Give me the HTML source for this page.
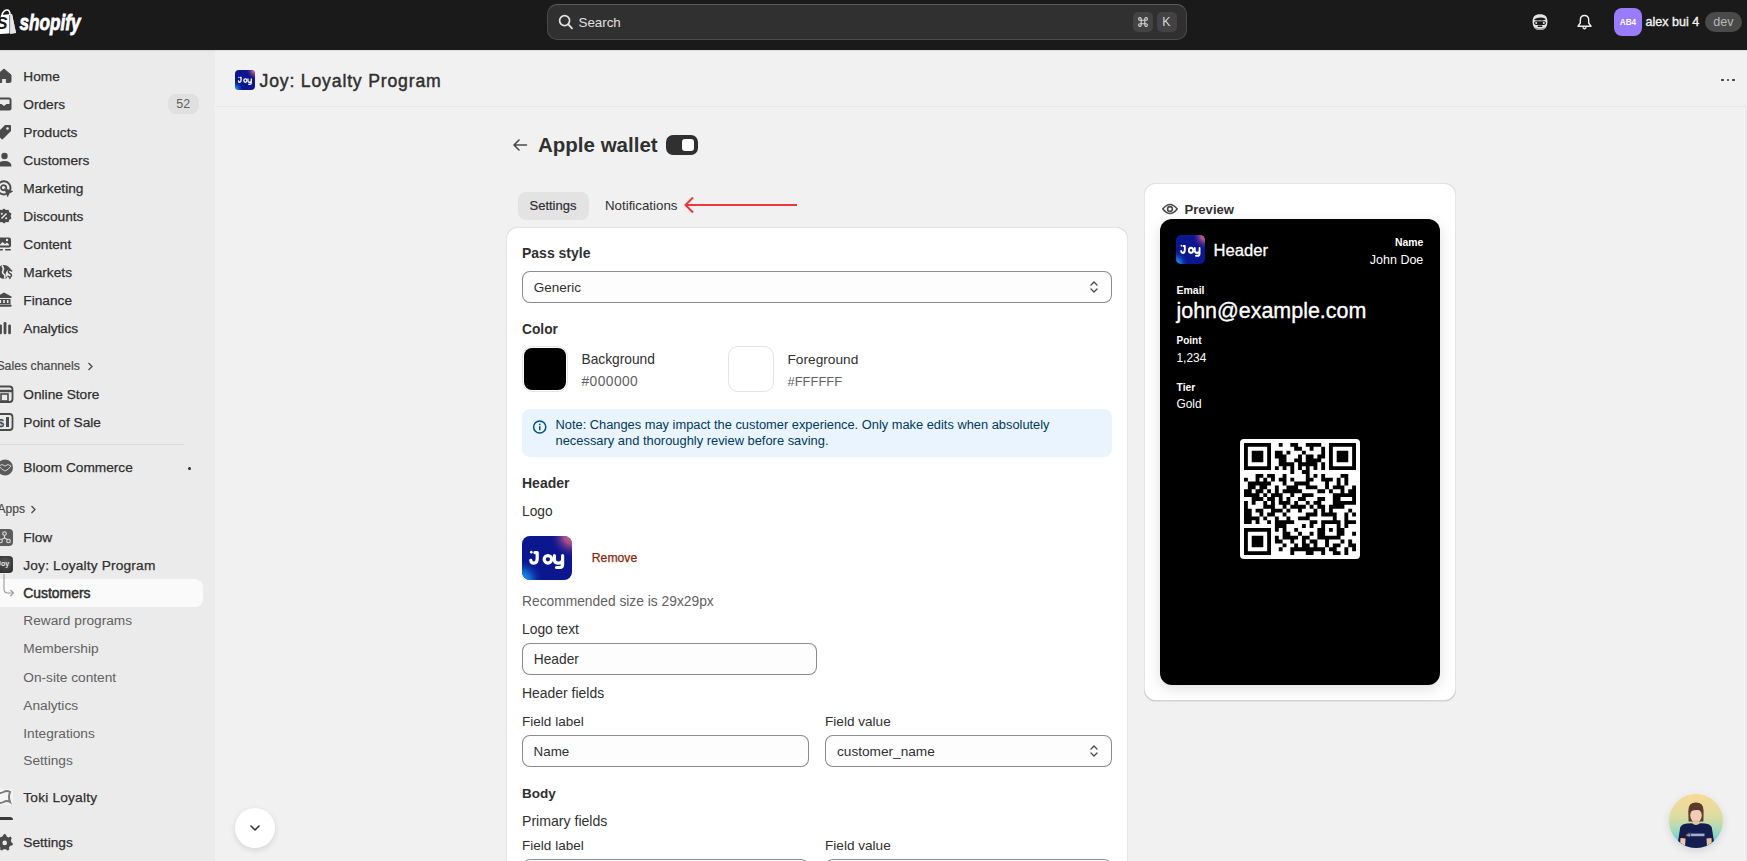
<!DOCTYPE html>
<html><head><meta charset="utf-8"><style>
html,body{margin:0;padding:0;}
body{width:1747px;height:861px;overflow:hidden;position:relative;background:#f1f1f1;font-family:"Liberation Sans",sans-serif;}
.t{position:absolute;white-space:nowrap;}
.b{position:absolute;box-sizing:border-box;}
svg{position:absolute;overflow:visible;}
.joy{background:radial-gradient(circle at 100% 0%,#e26a7c 0%,rgba(190,80,130,0.55) 22%,rgba(20,30,150,0) 50%),radial-gradient(circle at 0% 100%,#19aaf6 0%,rgba(25,140,240,0.5) 18%,rgba(20,40,160,0) 42%),#0e1a8e;}
.inp{background:#fdfdfd;border:1px solid #8a8a8a;border-top-color:#898f94;border-radius:8px;}
</style></head><body>
<div class="b" style="left:0px;top:0px;width:1747px;height:50px;background:#1a1a1a"></div>
<div class="b" style="left:0px;top:50px;width:1747px;height:2px;background:linear-gradient(rgba(0,0,0,.09),rgba(0,0,0,0))"></div>
<svg style="left:-3px;top:9px" width="20" height="26" viewBox="0 0 20 26">
<path d="M4 6 L15 5 L19 24 L1 25 Z" fill="#fff"/>
<path d="M5 7 C5 2 9 1 10 1 C12 1 13 3 13 6" stroke="#fff" stroke-width="1.6" fill="none"/>
<path d="M13 5.3 L15 5 L19 24 L13 25 Z" fill="#e6e6e6"/>
<line x1="12.6" y1="6" x2="12.6" y2="25" stroke="#1a1a1a" stroke-width="0.6"/>
<text x="-0.5" y="20.4" font-family="Liberation Sans" font-weight="700" font-size="16.5" fill="#1a1a1a" font-style="italic">S</text>
</svg>
<svg style="left:19px;top:8px" width="64" height="28"><text x="0.5" y="21.5" font-family="Liberation Sans" font-weight="700" font-style="italic" font-size="22" fill="#fff" stroke="#fff" stroke-width="0.8" textLength="61" lengthAdjust="spacingAndGlyphs">shopify</text></svg>
<div class="b" style="left:547px;top:4px;width:640px;height:36px;background:#303030;border:1px solid #4a4a4a;border-top-color:#5a5a5a;border-radius:10px"></div>
<svg style="left:558px;top:14px" width="16" height="16" viewBox="0 0 16 16"><circle cx="6.6" cy="6.6" r="5" stroke="#e3e3e3" stroke-width="1.7" fill="none"/><line x1="10.3" y1="10.3" x2="14" y2="14.3" stroke="#e3e3e3" stroke-width="1.8" stroke-linecap="round"/></svg>
<div class="t " style="left:578.50px;top:14.00px;font-size:13.35px;line-height:17px;font-weight:400;color:#e0e0e0;">Search</div>
<div class="b" style="left:1133px;top:12px;width:20px;height:20px;background:#434343;border-radius:5px"></div>
<div class="b" style="left:1157px;top:12px;width:20px;height:20px;background:#434343;border-radius:5px"></div>
<svg style="left:1137.5px;top:17px" width="10" height="10" viewBox="0 0 10 10"><path d="M3.2 3.2 H6.8 V6.8 H3.2 Z M3.2 3.2 V1.9 A1.3 1.3 0 1 0 1.9 3.2 H3.2 M6.8 3.2 V1.9 A1.3 1.3 0 1 1 8.1 3.2 H6.8 M3.2 6.8 V8.1 A1.3 1.3 0 1 1 1.9 6.8 H3.2 M6.8 6.8 V8.1 A1.3 1.3 0 1 0 8.1 6.8 H6.8" stroke="#d6d6d6" stroke-width="1.1" fill="none"/></svg>
<div class="t " style="left:1162.30px;top:14.00px;font-size:12.3px;line-height:16px;font-weight:400;color:#d6d6d6;">K</div>
<svg style="left:1531px;top:13px" width="18" height="18" viewBox="0 0 18 18">
<path d="M9 1.2 C4 1.2 1.6 3.5 1.6 8.5 C1.6 14 4 17 9 17 C14 17 16.4 14 16.4 8.5 C16.4 3.5 14 1.2 9 1.2 Z" fill="#e6e6e6"/>
<path d="M3 6.2 Q9 3 15 6 Q14 8 9 7.3 Q4 8 3 6.2 Z" fill="#1a1a1a"/>
<rect x="3" y="8.3" width="12" height="3.6" rx="1.8" fill="#1a1a1a"/>
<circle cx="5.2" cy="10.1" r="1" fill="#e6e6e6"/><circle cx="12.8" cy="10.1" r="1" fill="#e6e6e6"/>
<rect x="6.5" y="12.6" width="5" height="1.4" rx="0.7" fill="#1a1a1a"/>
<path d="M3.5 14.6 Q9 16.2 14.5 14.6 L14 16 Q9 17.8 4 16 Z" fill="#9a9a9a"/>
</svg>
<svg style="left:1576px;top:14px" width="17" height="17" viewBox="0 0 17 17">
<path d="M8.5 1.5 C5.6 1.5 4.3 3.6 4.3 6.3 V9 L2 12.2 H15 L12.7 9 V6.3 C12.7 3.6 11.4 1.5 8.5 1.5 Z" stroke="#f0f0f0" stroke-width="1.4" fill="none" stroke-linejoin="round"/>
<path d="M6.7 13.4 Q8.5 16.2 10.3 13.4" stroke="#f0f0f0" stroke-width="1.4" fill="none"/>
</svg>
<div class="b" style="left:1614px;top:8px;width:28px;height:28px;background:#9a7bfc;border-radius:8px"></div>
<div class="t " style="left:1619.80px;top:17.00px;font-size:8.2px;line-height:11px;font-weight:700;color:#ffffff;">AB4</div>
<div class="t " style="left:1645.50px;top:14.00px;font-size:12.55px;line-height:16px;font-weight:400;color:#f3f3f3;-webkit-text-stroke:0.35px #f3f3f3;">alex bui 4</div>
<div class="b" style="left:1705px;top:12px;width:37px;height:20px;background:#4a4a4a;border-radius:10px"></div>
<div class="t " style="left:1713.20px;top:14.00px;font-size:12.6px;line-height:16px;font-weight:400;color:#b8b8b8;">dev</div>
<div class="b" style="left:0px;top:50px;width:215px;height:811px;background:#ebebeb"></div>
<div class="b" style="left:0px;top:50px;width:215px;height:2px;background:linear-gradient(rgba(0,0,0,.09),rgba(0,0,0,0))"></div>
<div class="t " style="left:23.30px;top:68.00px;font-size:13.7px;line-height:18px;font-weight:400;color:#303030;-webkit-text-stroke:0.25px #303030;">Home</div>
<div class="t " style="left:23.30px;top:96.00px;font-size:13.7px;line-height:18px;font-weight:400;color:#303030;-webkit-text-stroke:0.25px #303030;">Orders</div>
<div class="t " style="left:23.30px;top:124.00px;font-size:13.7px;line-height:18px;font-weight:400;color:#303030;-webkit-text-stroke:0.25px #303030;">Products</div>
<div class="t " style="left:23.30px;top:152.00px;font-size:13.7px;line-height:18px;font-weight:400;color:#303030;-webkit-text-stroke:0.25px #303030;">Customers</div>
<div class="t " style="left:23.30px;top:180.00px;font-size:13.7px;line-height:18px;font-weight:400;color:#303030;-webkit-text-stroke:0.25px #303030;">Marketing</div>
<div class="t " style="left:23.30px;top:208.00px;font-size:13.7px;line-height:18px;font-weight:400;color:#303030;-webkit-text-stroke:0.25px #303030;">Discounts</div>
<div class="t " style="left:23.30px;top:236.00px;font-size:13.7px;line-height:18px;font-weight:400;color:#303030;-webkit-text-stroke:0.25px #303030;">Content</div>
<div class="t " style="left:23.30px;top:264.00px;font-size:13.7px;line-height:18px;font-weight:400;color:#303030;-webkit-text-stroke:0.25px #303030;">Markets</div>
<div class="t " style="left:23.30px;top:292.00px;font-size:13.7px;line-height:18px;font-weight:400;color:#303030;-webkit-text-stroke:0.25px #303030;">Finance</div>
<div class="t " style="left:23.30px;top:320.00px;font-size:13.7px;line-height:18px;font-weight:400;color:#303030;-webkit-text-stroke:0.25px #303030;">Analytics</div>
<div class="b" style="left:168px;top:94px;width:31px;height:20px;background:#e0e0e0;border-radius:8px"></div>
<div class="t " style="left:176.30px;top:96.00px;font-size:12.5px;line-height:16px;font-weight:400;color:#616161;">52</div>
<svg style="left:-6px;top:66px" width="20" height="20" viewBox="0 0 20 20"><path d="M10 3 L17 9 V15 Q17 16.5 15.5 16.5 H12.3 V12.5 H7.7 V16.5 H4.5 Q3 16.5 3 15 V9 Z" fill="#4a4a4a" stroke="#4a4a4a" stroke-width="1" stroke-linejoin="round"/></svg>
<svg style="left:-6px;top:94px" width="20" height="20" viewBox="0 0 20 20"><path d="M5 3.5 H15 Q17.5 3.5 17.5 6 V14 Q17.5 16.5 15 16.5 H5 Q2.5 16.5 2.5 14 V6 Q2.5 3.5 5 3.5 Z" fill="#4a4a4a"/><path d="M4.5 5.5 H15.5 V10 H12.5 L10 12 L7.5 10 H4.5 Z" fill="#ebebeb"/></svg>
<svg style="left:-6px;top:122px" width="20" height="20" viewBox="0 0 20 20"><path d="M11 3 H16 Q17 3 17 4 V9 L9 17 Q8.2 17.8 7.4 17 L3 12.6 Q2.2 11.8 3 11 Z" fill="#4a4a4a"/><circle cx="13.5" cy="6.5" r="1.3" fill="#ebebeb"/></svg>
<svg style="left:-6px;top:150px" width="20" height="20" viewBox="0 0 20 20"><circle cx="10.5" cy="6" r="3.2" fill="#4a4a4a"/><path d="M3.5 16.5 Q3.5 11 10.5 11 Q17.5 11 17.5 16.5 Z" fill="#4a4a4a"/></svg>
<svg style="left:-6px;top:178px" width="20" height="20" viewBox="0 0 20 20"><path d="M16.2 11.8 A6.6 6.6 0 1 0 11.8 16.2" stroke="#4a4a4a" stroke-width="1.9" fill="none" stroke-linecap="round"/><path d="M12.2 10.2 A2.6 2.6 0 1 0 10.2 12.2" stroke="#4a4a4a" stroke-width="1.8" fill="none" stroke-linecap="round"/><path d="M10.6 10.6 L18.6 13.4 L15.3 15.1 L13.6 18.6 Z" fill="#4a4a4a" stroke="#4a4a4a" stroke-width="0.8" stroke-linejoin="round"/></svg>
<svg style="left:-6px;top:206px" width="20" height="20" viewBox="0 0 20 20"><path d="M10 2.5 L12 4 L14.5 3.8 L15.3 6.2 L17.5 7.5 L16.6 10 L17.5 12.5 L15.3 13.8 L14.5 16.2 L12 16 L10 17.5 L8 16 L5.5 16.2 L4.7 13.8 L2.5 12.5 L3.4 10 L2.5 7.5 L4.7 6.2 L5.5 3.8 L8 4 Z" fill="#4a4a4a"/><path d="M7.5 12.5 L12.5 7.5" stroke="#ebebeb" stroke-width="1.4"/><circle cx="7.8" cy="7.8" r="1" fill="#ebebeb"/><circle cx="12.2" cy="12.2" r="1" fill="#ebebeb"/></svg>
<svg style="left:-6px;top:234px" width="20" height="20" viewBox="0 0 20 20"><rect x="3" y="3.5" width="14" height="10" rx="2" fill="#4a4a4a"/><path d="M5 11.5 L8.5 8 L11 10 L13 8.5 L15 10.5 V11.5 Z" fill="#ebebeb"/><circle cx="13" cy="6" r="1.2" fill="#ebebeb"/><rect x="3" y="15" width="6" height="1.6" rx="0.8" fill="#4a4a4a"/><rect x="11" y="15" width="6" height="1.6" rx="0.8" fill="#4a4a4a"/></svg>
<svg style="left:-6px;top:262px" width="20" height="20" viewBox="0 0 20 20"><circle cx="10" cy="9.8" r="6.9" fill="#4a4a4a"/><circle cx="16.2" cy="12.2" r="4.6" fill="#ebebeb"/><path d="M7.8 3.6 Q10.5 6.2 9 8.6 Q7.6 10.8 10.2 12.6 Q11.6 13.8 10.6 16.6" stroke="#ebebeb" stroke-width="1.5" fill="none"/><path d="M17.6 8.9 Q16.8 8.1 15.7 8.2 Q14.2 8.4 14.3 9.8 Q14.4 11 15.9 11.5 Q17.5 12 17.5 13.5 Q17.4 15 15.8 15.1 Q14.6 15.1 14 14.2 M15.9 7 V8.2 M15.9 15.1 V16.4" stroke="#4a4a4a" stroke-width="1.5" fill="none" stroke-linecap="round"/></svg>
<svg style="left:-6px;top:290px" width="20" height="20" viewBox="0 0 20 20"><path d="M10 2.5 L17.5 6.5 V8 H2.5 V6.5 Z" fill="#4a4a4a"/><rect x="3.5" y="9" width="13" height="5" fill="#4a4a4a"/><rect x="5.5" y="10" width="1.6" height="3" fill="#ebebeb"/><rect x="9.2" y="10" width="1.6" height="3" fill="#ebebeb"/><rect x="12.9" y="10" width="1.6" height="3" fill="#ebebeb"/><rect x="2.5" y="14.5" width="15" height="2.2" rx="0.6" fill="#4a4a4a"/></svg>
<svg style="left:-6px;top:318px" width="20" height="20" viewBox="0 0 20 20"><rect x="5.2" y="6.6" width="2.7" height="9.6" rx="1.2" fill="#4a4a4a"/><rect x="9.6" y="4" width="2.8" height="12.2" rx="1.2" fill="#4a4a4a"/><rect x="14.2" y="6.6" width="2.7" height="9.6" rx="1.2" fill="#4a4a4a"/></svg>
<div class="t " style="left:-3.60px;top:358.00px;font-size:12.3px;line-height:16px;font-weight:400;color:#4a4a4a;-webkit-text-stroke:0.2px #4a4a4a;">Sales channels</div>
<svg style="left:87px;top:362px" width="7" height="9" viewBox="0 0 7 9"><path d="M1.5 1 L5 4.5 L1.5 8" stroke="#4a4a4a" stroke-width="1.3" fill="none"/></svg>
<div class="t " style="left:23.30px;top:386.00px;font-size:13.7px;line-height:18px;font-weight:400;color:#303030;-webkit-text-stroke:0.25px #303030;">Online Store</div>
<div class="t " style="left:23.30px;top:414.00px;font-size:13.7px;line-height:18px;font-weight:400;color:#303030;-webkit-text-stroke:0.25px #303030;">Point of Sale</div>
<svg style="left:-6px;top:384px" width="20" height="20" viewBox="0 0 20 20"><rect x="2.5" y="2.5" width="16" height="15.5" rx="3" stroke="#4a4a4a" stroke-width="1.8" fill="none"/><path d="M3 7 H18" stroke="#4a4a4a" stroke-width="2.5"/><rect x="7" y="10" width="7" height="7" stroke="#4a4a4a" stroke-width="1.6" fill="none"/></svg>
<svg style="left:-6px;top:412px" width="20" height="20" viewBox="0 0 20 20"><rect x="2.5" y="2" width="16" height="16" rx="3" stroke="#4a4a4a" stroke-width="1.8" fill="none"/><text x="4" y="15" font-family="Liberation Sans" font-weight="700" font-size="11" fill="#4a4a4a">$</text><rect x="12" y="5" width="3" height="10" fill="#4a4a4a"/></svg>
<div class="b" style="left:0px;top:444px;width:184px;height:1px;background:#dadada"></div>
<div class="t " style="left:23.30px;top:459.00px;font-size:13.7px;line-height:18px;font-weight:400;color:#303030;-webkit-text-stroke:0.25px #303030;">Bloom Commerce</div>
<svg style="left:-6px;top:458px" width="20" height="20" viewBox="0 0 20 20"><circle cx="11" cy="9.5" r="8" fill="#5a5a5a"/><path d="M5 8 Q8 5 11 8 Q14 5 17 8 Q14 12 11 13 Q8 12 5 8 Z" stroke="#cfcfcf" stroke-width="1" fill="none"/></svg>
<div class="b" style="left:187.5px;top:467px;width:3px;height:3px;background:#303030;border-radius:50%"></div>
<div class="t " style="left:-2.50px;top:501.00px;font-size:12.06px;line-height:16px;font-weight:400;color:#4a4a4a;-webkit-text-stroke:0.2px #4a4a4a;">Apps</div>
<svg style="left:30px;top:505px" width="7" height="9" viewBox="0 0 7 9"><path d="M1.5 1 L5 4.5 L1.5 8" stroke="#4a4a4a" stroke-width="1.3" fill="none"/></svg>
<div class="t " style="left:23.30px;top:529.00px;font-size:13.7px;line-height:18px;font-weight:400;color:#303030;-webkit-text-stroke:0.25px #303030;">Flow</div>
<svg style="left:-6px;top:528px" width="20" height="20" viewBox="0 0 20 20"><rect x="2" y="1" width="17" height="17" rx="4" fill="#5c5c5c"/><circle cx="10.5" cy="5.5" r="1.8" stroke="#e0e0e0" stroke-width="1.1" fill="none"/><circle cx="6.5" cy="13" r="1.8" stroke="#e0e0e0" stroke-width="1.1" fill="none"/><circle cx="14.5" cy="13" r="1.8" stroke="#e0e0e0" stroke-width="1.1" fill="none"/><path d="M10.5 7.3 V10 L7.5 11.5 M10.5 10 L13.5 11.5" stroke="#e0e0e0" stroke-width="1.1" fill="none"/></svg>
<div class="t " style="left:23.30px;top:557.00px;font-size:13.7px;line-height:18px;font-weight:400;color:#303030;-webkit-text-stroke:0.25px #303030;letter-spacing:0.18px;">Joy: Loyalty Program</div>
<div class="b" style="left:-6px;top:556px;width:19px;height:17px;border-radius:4px;background:radial-gradient(circle at 60% 40%,#5a5a5a,#1c1c1c)"></div>
<div class="t" style="left:-3px;top:559px;font-size:7px;line-height:10px;font-weight:700;color:#e8e8e8">Joy</div>
<div class="b" style="left:-10px;top:579px;width:213px;height:28px;background:#fafafa;border-radius:8px"></div>
<svg style="left:0px;top:573px" width="20" height="30" viewBox="0 0 20 30"><path d="M4 1 V16 Q4 20 8 20 H13" stroke="#9a9a9a" stroke-width="1.1" fill="none"/><path d="M10.5 17 L13.5 20 L10.5 23" stroke="#9a9a9a" stroke-width="1.1" fill="none"/></svg>
<div class="t " style="left:23.30px;top:584.00px;font-size:13.9px;line-height:18px;font-weight:400;color:#303030;-webkit-text-stroke:0.5px #303030;">Customers</div>
<div class="t " style="left:23.30px;top:612.00px;font-size:13.7px;line-height:18px;font-weight:400;color:#616161;">Reward programs</div>
<div class="t " style="left:23.30px;top:640.00px;font-size:13.7px;line-height:18px;font-weight:400;color:#616161;">Membership</div>
<div class="t " style="left:23.30px;top:669.00px;font-size:13.7px;line-height:18px;font-weight:400;color:#616161;">On-site content</div>
<div class="t " style="left:23.30px;top:697.00px;font-size:13.7px;line-height:18px;font-weight:400;color:#616161;">Analytics</div>
<div class="t " style="left:23.30px;top:725.00px;font-size:13.7px;line-height:18px;font-weight:400;color:#616161;">Integrations</div>
<div class="t " style="left:23.30px;top:752.00px;font-size:13.7px;line-height:18px;font-weight:400;color:#616161;">Settings</div>
<div class="t " style="left:23.30px;top:789.00px;font-size:13.7px;line-height:18px;font-weight:400;color:#303030;-webkit-text-stroke:0.25px #303030;letter-spacing:0.2px;">Toki Loyalty</div>
<div class="b" style="left:-6px;top:789px;width:19px;height:16px;background:#f4f4f4;border-radius:4px"></div>
<svg style="left:-6px;top:788px" width="20" height="18" viewBox="0 0 20 18"><path d="M3 4 Q6 6 9.5 4 Q13 2 16 4 Q14 9 16 14 Q13 12 9.5 14 Q6 16 3 14 Q5 9 3 4 Z" stroke="#7a7a7a" stroke-width="2" fill="none"/></svg>
<div class="b" style="left:-4px;top:817px;width:17px;height:3px;background:#3a3a3a;border-radius:0 3px 0 0"></div>
<div class="t " style="left:23.30px;top:834.00px;font-size:13.7px;line-height:18px;font-weight:400;color:#303030;-webkit-text-stroke:0.25px #303030;">Settings</div>
<svg style="left:-6px;top:832px" width="20" height="20" viewBox="0 0 20 20"><path d="M10 2 L12 2.5 L12.6 4.6 L14.6 5.5 L16.6 4.6 L17.8 6.3 L16.8 8.3 L17.5 10.5 L19 11.5 L18.3 13.5 L16.2 13.8 L15 15.6 L15.3 17.8 L13.4 18.6 L11.8 17.2 L9.6 17.2 L8 18.6 L6.1 17.8 L6.4 15.6 L5 14 L3 13.5 L2.5 11.5 L4 10.3 L4.2 8 L3.2 6.2 L4.6 4.6 L6.6 5.3 L8.3 4.4 Z" fill="#4a4a4a"/><circle cx="10.7" cy="10.9" r="2.3" fill="#ebebeb"/></svg>
<div class="b" style="left:215px;top:106px;width:1532px;height:1px;background:#e7e7e7"></div>
<svg style="left:235px;top:70px" width="20" height="20" viewBox="0 0 50 44" preserveAspectRatio="none"><defs>
<radialGradient id="jp1" cx="50" cy="0" r="22" gradientUnits="userSpaceOnUse"><stop offset="0" stop-color="#e26d7d"/><stop offset="0.35" stop-color="#c35a86" stop-opacity="0.85"/><stop offset="1" stop-color="#3a1a9a" stop-opacity="0"/></radialGradient>
<radialGradient id="jc1" cx="0" cy="44" r="22" gradientUnits="userSpaceOnUse"><stop offset="0" stop-color="#19b2f8"/><stop offset="0.4" stop-color="#1478e0" stop-opacity="0.8"/><stop offset="1" stop-color="#0a1490" stop-opacity="0"/></radialGradient>
<clipPath id="jk1"><rect width="50" height="44" rx="10.0" ry="8.8"/></clipPath></defs>
<g clip-path="url(#jk1)"><rect width="50" height="44" fill="#0b168f"/><rect width="50" height="44" fill="url(#jp1)"/><rect width="50" height="44" fill="url(#jc1)"/></g>
<g stroke="#fff" stroke-width="3.2" fill="none" stroke-linecap="round" stroke-linejoin="round">
<path d="M12.9 16.6 H15.2 V22.8 Q15.2 27.1 11.6 27.1 Q9.2 27.1 8.8 24.4"/>
<circle cx="25.9" cy="23.3" r="3.75"/>
<path d="M32.4 19.7 V23.4 Q32.4 27.1 36.5 27.1 Q40.6 27.1 40.6 23.4 M40.6 19.7 V28.4 Q40.6 31.5 37.2 31.5 H34.5"/>
</g><circle cx="9.3" cy="16.2" r="1.35" fill="#fff"/></svg>
<div class="t " style="left:259.50px;top:70.00px;font-size:17.65px;line-height:23px;font-weight:400;color:#303030;-webkit-text-stroke:0.45px #303030;letter-spacing:0.82px;">Joy: Loyalty Program</div>
<div class="b" style="left:1721.0px;top:78.7px;width:2.6px;height:2.6px;background:#303030;border-radius:50%"></div>
<div class="b" style="left:1726.7px;top:78.7px;width:2.6px;height:2.6px;background:#303030;border-radius:50%"></div>
<div class="b" style="left:1732.4px;top:78.7px;width:2.6px;height:2.6px;background:#303030;border-radius:50%"></div>
<div class="b" style="left:1746px;top:107px;width:1px;height:754px;background:#e4e4e4"></div>
<svg style="left:512px;top:138px" width="16" height="14" viewBox="0 0 16 14"><path d="M14.5 7 H2.5 M7 2 L2 7 L7 12" stroke="#4a4a4a" stroke-width="1.6" fill="none" stroke-linecap="round" stroke-linejoin="round"/></svg>
<div class="t " style="left:538.00px;top:131.00px;font-size:20.5px;line-height:27px;font-weight:700;color:#303030;">Apple wallet</div>
<div class="b" style="left:666px;top:135px;width:32px;height:20px;background:#303030;border-radius:7px"></div>
<div class="b" style="left:682px;top:139px;width:12px;height:12px;background:#fff;border-radius:3px"></div>
<div class="b" style="left:518px;top:192px;width:71px;height:28px;background:#e3e3e3;border-radius:8px"></div>
<div class="t " style="left:529.50px;top:197.00px;font-size:13px;line-height:17px;font-weight:400;color:#303030;-webkit-text-stroke:0.2px #303030;">Settings</div>
<div class="t " style="left:605.00px;top:197.00px;font-size:13.3px;line-height:17px;font-weight:400;color:#303030;">Notifications</div>
<svg style="left:683px;top:195px" width="116" height="20" viewBox="0 0 116 20"><path d="M2.5 10 H114" stroke="#e8393b" stroke-width="2"/><path d="M10 2.5 L2.5 10 L10 17.5" stroke="#e8393b" stroke-width="2" fill="none"/></svg>
<div class="b" style="left:506px;top:227px;width:622px;height:700px;background:#fff;border-radius:12px;box-shadow:0 1px 0 0 rgba(26,26,26,.07),inset 0 1px 0 0 rgba(204,204,204,.5),inset 1px 0 0 0 rgba(0,0,0,.1),inset -1px 0 0 0 rgba(0,0,0,.1)"></div>
<div class="t " style="left:522.00px;top:244.00px;font-size:14px;line-height:18px;font-weight:700;color:#303030;">Pass style</div>
<div class="b inp" style="left:522px;top:271px;width:590px;height:32px;"></div>
<div class="t " style="left:533.80px;top:279.00px;font-size:13.5px;line-height:18px;font-weight:400;color:#303030;">Generic</div>
<svg style="left:1089px;top:280px" width="10" height="14" viewBox="0 0 10 14"><path d="M2 5 L5 2 L8 5 M2 9 L5 12 L8 9" stroke="#4a4a4a" stroke-width="1.3" fill="none" stroke-linecap="round" stroke-linejoin="round"/></svg>
<div class="t " style="left:522.00px;top:321.00px;font-size:13.75px;line-height:18px;font-weight:700;color:#303030;">Color</div>
<div class="b" style="left:522px;top:346px;width:46px;height:46px;border:1px solid #e6e6e6;border-radius:10px"></div>
<div class="b" style="left:524px;top:348px;width:42px;height:42px;background:#000;border-radius:8px"></div>
<div class="t " style="left:581.50px;top:351.00px;font-size:13.75px;line-height:18px;font-weight:400;color:#303030;">Background</div>
<div class="t " style="left:581.50px;top:373.00px;font-size:13.75px;line-height:18px;font-weight:400;color:#616161;letter-spacing:0.45px;">#000000</div>
<div class="b" style="left:728px;top:346px;width:46px;height:46px;border:1px solid #e3e3e3;border-radius:10px"></div>
<div class="t " style="left:787.50px;top:351.00px;font-size:13.7px;line-height:18px;font-weight:400;color:#303030;">Foreground</div>
<div class="t " style="left:787.50px;top:373.00px;font-size:12.95px;line-height:17px;font-weight:400;color:#616161;">#FFFFFF</div>
<div class="b" style="left:522px;top:409px;width:590px;height:48px;background:#eaf4ff;border-radius:8px"></div>
<svg style="left:532px;top:420px" width="16" height="16" viewBox="0 0 16 16"><circle cx="7.7" cy="7" r="6.1" stroke="#00527c" stroke-width="1.5" fill="none"/><rect x="7" y="6" width="1.5" height="4.3" rx="0.6" fill="#00527c"/><circle cx="7.75" cy="4.3" r="0.9" fill="#00527c"/></svg>
<div class="t " style="left:555.50px;top:416.00px;font-size:12.85px;line-height:17px;font-weight:400;color:#003a5a;">Note: Changes may impact the customer experience. Only make edits when absolutely</div>
<div class="t " style="left:555.50px;top:432.00px;font-size:12.9px;line-height:17px;font-weight:400;color:#003a5a;">necessary and thoroughly review before saving.</div>
<div class="t " style="left:522.00px;top:474.00px;font-size:14px;line-height:18px;font-weight:700;color:#303030;">Header</div>
<div class="t " style="left:522.00px;top:503.00px;font-size:13.75px;line-height:18px;font-weight:400;color:#303030;">Logo</div>
<svg style="left:522px;top:536px" width="50" height="44" viewBox="0 0 50 44" preserveAspectRatio="none"><defs>
<radialGradient id="jp2" cx="50" cy="0" r="22" gradientUnits="userSpaceOnUse"><stop offset="0" stop-color="#e26d7d"/><stop offset="0.35" stop-color="#c35a86" stop-opacity="0.85"/><stop offset="1" stop-color="#3a1a9a" stop-opacity="0"/></radialGradient>
<radialGradient id="jc2" cx="0" cy="44" r="22" gradientUnits="userSpaceOnUse"><stop offset="0" stop-color="#19b2f8"/><stop offset="0.4" stop-color="#1478e0" stop-opacity="0.8"/><stop offset="1" stop-color="#0a1490" stop-opacity="0"/></radialGradient>
<clipPath id="jk2"><rect width="50" height="44" rx="8.0" ry="8.0"/></clipPath></defs>
<g clip-path="url(#jk2)"><rect width="50" height="44" fill="#0b168f"/><rect width="50" height="44" fill="url(#jp2)"/><rect width="50" height="44" fill="url(#jc2)"/></g>
<g stroke="#fff" stroke-width="3.2" fill="none" stroke-linecap="round" stroke-linejoin="round">
<path d="M12.9 16.6 H15.2 V22.8 Q15.2 27.1 11.6 27.1 Q9.2 27.1 8.8 24.4"/>
<circle cx="25.9" cy="23.3" r="3.75"/>
<path d="M32.4 19.7 V23.4 Q32.4 27.1 36.5 27.1 Q40.6 27.1 40.6 23.4 M40.6 19.7 V28.4 Q40.6 31.5 37.2 31.5 H34.5"/>
</g><circle cx="9.3" cy="16.2" r="1.35" fill="#fff"/></svg>
<div class="t " style="left:591.80px;top:550.00px;font-size:12.2px;line-height:16px;font-weight:400;color:#8e1f0b;-webkit-text-stroke:0.25px #8e1f0b;">Remove</div>
<div class="t " style="left:522.00px;top:593.00px;font-size:13.8px;line-height:18px;font-weight:400;color:#616161;">Recommended size is 29x29px</div>
<div class="t " style="left:522.00px;top:620.00px;font-size:13.85px;line-height:18px;font-weight:400;color:#303030;">Logo text</div>
<div class="b inp" style="left:522px;top:643px;width:295px;height:32px;"></div>
<div class="t " style="left:533.80px;top:651.00px;font-size:13.75px;line-height:18px;font-weight:400;color:#303030;">Header</div>
<div class="t " style="left:522.00px;top:684.00px;font-size:13.95px;line-height:18px;font-weight:400;color:#303030;">Header fields</div>
<div class="t " style="left:522.00px;top:713.00px;font-size:13.55px;line-height:18px;font-weight:400;color:#303030;">Field label</div>
<div class="t " style="left:825.00px;top:713.00px;font-size:13.6px;line-height:18px;font-weight:400;color:#303030;">Field value</div>
<div class="b inp" style="left:522px;top:735px;width:287px;height:32px;"></div>
<div class="b inp" style="left:825px;top:735px;width:287px;height:32px;"></div>
<div class="t " style="left:533.60px;top:743.00px;font-size:13.4px;line-height:17px;font-weight:400;color:#303030;">Name</div>
<div class="t " style="left:837.00px;top:743.00px;font-size:13.65px;line-height:18px;font-weight:400;color:#303030;">customer_name</div>
<svg style="left:1089px;top:744px" width="10" height="14" viewBox="0 0 10 14"><path d="M2 5 L5 2 L8 5 M2 9 L5 12 L8 9" stroke="#4a4a4a" stroke-width="1.3" fill="none" stroke-linecap="round" stroke-linejoin="round"/></svg>
<div class="t " style="left:522.00px;top:785.00px;font-size:13.5px;line-height:18px;font-weight:700;color:#303030;">Body</div>
<div class="t " style="left:522.00px;top:812.00px;font-size:14.1px;line-height:18px;font-weight:400;color:#303030;">Primary fields</div>
<div class="t " style="left:522.00px;top:837.00px;font-size:13.55px;line-height:18px;font-weight:400;color:#303030;">Field label</div>
<div class="t " style="left:825.00px;top:837.00px;font-size:13.6px;line-height:18px;font-weight:400;color:#303030;">Field value</div>
<div class="b inp" style="left:522px;top:859px;width:287px;height:32px;"></div>
<div class="b inp" style="left:825px;top:859px;width:287px;height:32px;"></div>
<div class="b" style="left:1144px;top:183px;width:312px;height:518px;background:#fff;border-radius:12px;box-shadow:0 1px 0 0 rgba(26,26,26,.07),inset 0 1px 0 0 rgba(204,204,204,.5),inset 1px 0 0 0 rgba(0,0,0,.1),inset -1px 0 0 0 rgba(0,0,0,.1),inset 0 -1px 0 0 rgba(0,0,0,.17)"></div>
<svg style="left:1161px;top:201px" width="18" height="16" viewBox="0 0 18 16"><path d="M1.8 8 Q9 -1 16.2 8 Q9 17 1.8 8 Z" stroke="#4a4a4a" stroke-width="1.6" fill="none" stroke-linejoin="round"/><circle cx="9" cy="8" r="2.4" stroke="#4a4a4a" stroke-width="1.6" fill="none"/></svg>
<div class="t " style="left:1184.50px;top:201.00px;font-size:13.1px;line-height:17px;font-weight:700;color:#303030;">Preview</div>
<div class="b" style="left:1160px;top:219px;width:280px;height:466px;background:#000;border-radius:12px;box-shadow:0 4px 14px rgba(0,0,0,.12)"></div>
<svg style="left:1176px;top:235px" width="29" height="29" viewBox="0 0 50 44" preserveAspectRatio="none"><defs>
<radialGradient id="jp3" cx="50" cy="0" r="22" gradientUnits="userSpaceOnUse"><stop offset="0" stop-color="#e26d7d"/><stop offset="0.35" stop-color="#c35a86" stop-opacity="0.85"/><stop offset="1" stop-color="#3a1a9a" stop-opacity="0"/></radialGradient>
<radialGradient id="jc3" cx="0" cy="44" r="22" gradientUnits="userSpaceOnUse"><stop offset="0" stop-color="#19b2f8"/><stop offset="0.4" stop-color="#1478e0" stop-opacity="0.8"/><stop offset="1" stop-color="#0a1490" stop-opacity="0"/></radialGradient>
<clipPath id="jk3"><rect width="50" height="44" rx="8.620689655172415" ry="7.586206896551724"/></clipPath></defs>
<g clip-path="url(#jk3)"><rect width="50" height="44" fill="#0b168f"/><rect width="50" height="44" fill="url(#jp3)"/><rect width="50" height="44" fill="url(#jc3)"/></g>
<g stroke="#fff" stroke-width="3.2" fill="none" stroke-linecap="round" stroke-linejoin="round">
<path d="M12.9 16.6 H15.2 V22.8 Q15.2 27.1 11.6 27.1 Q9.2 27.1 8.8 24.4"/>
<circle cx="25.9" cy="23.3" r="3.75"/>
<path d="M32.4 19.7 V23.4 Q32.4 27.1 36.5 27.1 Q40.6 27.1 40.6 23.4 M40.6 19.7 V28.4 Q40.6 31.5 37.2 31.5 H34.5"/>
</g><circle cx="9.3" cy="16.2" r="1.35" fill="#fff"/></svg>
<div class="t " style="left:1213.50px;top:240.00px;font-size:16.6px;line-height:22px;font-weight:400;color:#fff;-webkit-text-stroke:0.3px #fff;">Header</div>
<div class="t" style="right:323.7px;top:235px;font-size:10.4px;line-height:16px;font-weight:700;color:#fff;text-align:right">Name</div>
<div class="t" style="right:323.7px;top:251px;font-size:12.5px;line-height:18px;font-weight:400;color:#fff;text-align:right">John Doe</div>
<div class="t " style="left:1176.50px;top:283.00px;font-size:10.5px;line-height:14px;font-weight:700;color:#fff;">Email</div>
<div class="t " style="left:1176.50px;top:297.00px;font-size:21.45px;line-height:28px;font-weight:400;color:#fff;-webkit-text-stroke:0.35px #fff;">john@example.com</div>
<div class="t " style="left:1176.50px;top:334.00px;font-size:10px;line-height:13px;font-weight:700;color:#fff;">Point</div>
<div class="t " style="left:1176.50px;top:351.00px;font-size:11.9px;line-height:15px;font-weight:400;color:#fff;">1,234</div>
<div class="t " style="left:1176.50px;top:381.00px;font-size:10.35px;line-height:13px;font-weight:700;color:#fff;">Tier</div>
<div class="t " style="left:1176.50px;top:397.00px;font-size:11.9px;line-height:15px;font-weight:400;color:#fff;">Gold</div>
<div class="b" style="left:1240px;top:439px;width:120px;height:120px;background:#fff;border-radius:4px"></div>
<svg style="left:1244px;top:443px" width="112" height="112" viewBox="0 0 112 112"><path fill="#000" d="M0.00 0.00H27.03V3.86H0.00ZM34.76 0.00H38.62V3.86H34.76ZM46.34 0.00H54.07V3.86H46.34ZM61.79 0.00H77.24V3.86H61.79ZM84.96 0.00H112.00V3.86H84.96ZM0.00 3.86H3.86V7.72H0.00ZM23.17 3.86H27.03V7.72H23.17ZM50.21 3.86H57.93V7.72H50.21ZM65.65 3.86H69.52V7.72H65.65ZM77.24 3.86H81.10V7.72H77.24ZM84.96 3.86H88.83V7.72H84.96ZM108.14 3.86H112.00V7.72H108.14ZM0.00 7.72H3.86V11.59H0.00ZM7.72 7.72H19.31V11.59H7.72ZM23.17 7.72H27.03V11.59H23.17ZM30.90 7.72H38.62V11.59H30.90ZM42.48 7.72H46.34V11.59H42.48ZM57.93 7.72H61.79V11.59H57.93ZM77.24 7.72H81.10V11.59H77.24ZM84.96 7.72H88.83V11.59H84.96ZM92.69 7.72H104.27V11.59H92.69ZM108.14 7.72H112.00V11.59H108.14ZM0.00 11.59H3.86V15.45H0.00ZM7.72 11.59H19.31V15.45H7.72ZM23.17 11.59H27.03V15.45H23.17ZM30.90 11.59H42.48V15.45H30.90ZM54.07 11.59H57.93V15.45H54.07ZM61.79 11.59H69.52V15.45H61.79ZM73.38 11.59H81.10V15.45H73.38ZM84.96 11.59H88.83V15.45H84.96ZM92.69 11.59H104.27V15.45H92.69ZM108.14 11.59H112.00V15.45H108.14ZM0.00 15.45H3.86V19.31H0.00ZM7.72 15.45H19.31V19.31H7.72ZM23.17 15.45H27.03V19.31H23.17ZM34.76 15.45H42.48V19.31H34.76ZM50.21 15.45H57.93V19.31H50.21ZM61.79 15.45H77.24V19.31H61.79ZM84.96 15.45H88.83V19.31H84.96ZM92.69 15.45H104.27V19.31H92.69ZM108.14 15.45H112.00V19.31H108.14ZM0.00 19.31H3.86V23.17H0.00ZM23.17 19.31H27.03V23.17H23.17ZM34.76 19.31H50.21V23.17H34.76ZM54.07 19.31H73.38V23.17H54.07ZM77.24 19.31H81.10V23.17H77.24ZM84.96 19.31H88.83V23.17H84.96ZM108.14 19.31H112.00V23.17H108.14ZM0.00 23.17H27.03V27.03H0.00ZM30.90 23.17H34.76V27.03H30.90ZM38.62 23.17H42.48V27.03H38.62ZM46.34 23.17H50.21V27.03H46.34ZM54.07 23.17H57.93V27.03H54.07ZM61.79 23.17H65.65V27.03H61.79ZM69.52 23.17H73.38V27.03H69.52ZM77.24 23.17H81.10V27.03H77.24ZM84.96 23.17H112.00V27.03H84.96ZM46.34 27.03H50.21V30.90H46.34ZM57.93 27.03H65.65V30.90H57.93ZM11.59 30.90H19.31V34.76H11.59ZM23.17 30.90H30.90V34.76H23.17ZM38.62 30.90H42.48V34.76H38.62ZM61.79 30.90H65.65V34.76H61.79ZM69.52 30.90H73.38V34.76H69.52ZM77.24 30.90H81.10V34.76H77.24ZM96.55 30.90H104.27V34.76H96.55ZM0.00 34.76H3.86V38.62H0.00ZM11.59 34.76H15.45V38.62H11.59ZM19.31 34.76H23.17V38.62H19.31ZM27.03 34.76H30.90V38.62H27.03ZM34.76 34.76H42.48V38.62H34.76ZM46.34 34.76H50.21V38.62H46.34ZM61.79 34.76H69.52V38.62H61.79ZM77.24 34.76H88.83V38.62H77.24ZM92.69 34.76H96.55V38.62H92.69ZM100.41 34.76H104.27V38.62H100.41ZM3.86 38.62H27.03V42.48H3.86ZM38.62 38.62H42.48V42.48H38.62ZM50.21 38.62H65.65V42.48H50.21ZM81.10 38.62H84.96V42.48H81.10ZM92.69 38.62H96.55V42.48H92.69ZM100.41 38.62H104.27V42.48H100.41ZM3.86 42.48H11.59V46.34H3.86ZM15.45 42.48H23.17V46.34H15.45ZM30.90 42.48H34.76V46.34H30.90ZM42.48 42.48H54.07V46.34H42.48ZM61.79 42.48H73.38V46.34H61.79ZM81.10 42.48H84.96V46.34H81.10ZM88.83 42.48H100.41V46.34H88.83ZM108.14 42.48H112.00V46.34H108.14ZM0.00 46.34H7.72V50.21H0.00ZM11.59 46.34H19.31V50.21H11.59ZM23.17 46.34H27.03V50.21H23.17ZM30.90 46.34H34.76V50.21H30.90ZM38.62 46.34H57.93V50.21H38.62ZM73.38 46.34H81.10V50.21H73.38ZM84.96 46.34H88.83V50.21H84.96ZM96.55 46.34H100.41V50.21H96.55ZM104.27 46.34H112.00V50.21H104.27ZM0.00 50.21H15.45V54.07H0.00ZM19.31 50.21H23.17V54.07H19.31ZM27.03 50.21H38.62V54.07H27.03ZM46.34 50.21H50.21V54.07H46.34ZM57.93 50.21H69.52V54.07H57.93ZM88.83 50.21H112.00V54.07H88.83ZM7.72 54.07H19.31V57.93H7.72ZM23.17 54.07H30.90V57.93H23.17ZM34.76 54.07H38.62V57.93H34.76ZM42.48 54.07H46.34V57.93H42.48ZM54.07 54.07H61.79V57.93H54.07ZM73.38 54.07H81.10V57.93H73.38ZM88.83 54.07H96.55V57.93H88.83ZM108.14 54.07H112.00V57.93H108.14ZM0.00 57.93H3.86V61.79H0.00ZM7.72 57.93H11.59V61.79H7.72ZM19.31 57.93H23.17V61.79H19.31ZM27.03 57.93H30.90V61.79H27.03ZM34.76 57.93H46.34V61.79H34.76ZM50.21 57.93H54.07V61.79H50.21ZM61.79 57.93H65.65V61.79H61.79ZM69.52 57.93H77.24V61.79H69.52ZM88.83 57.93H112.00V61.79H88.83ZM0.00 61.79H3.86V65.65H0.00ZM19.31 61.79H30.90V65.65H19.31ZM38.62 61.79H42.48V65.65H38.62ZM46.34 61.79H61.79V65.65H46.34ZM65.65 61.79H69.52V65.65H65.65ZM73.38 61.79H81.10V65.65H73.38ZM84.96 61.79H100.41V65.65H84.96ZM0.00 65.65H7.72V69.52H0.00ZM11.59 65.65H19.31V69.52H11.59ZM27.03 65.65H38.62V69.52H27.03ZM42.48 65.65H46.34V69.52H42.48ZM54.07 65.65H57.93V69.52H54.07ZM69.52 65.65H73.38V69.52H69.52ZM77.24 65.65H81.10V69.52H77.24ZM84.96 65.65H88.83V69.52H84.96ZM104.27 65.65H108.14V69.52H104.27ZM0.00 69.52H7.72V73.38H0.00ZM15.45 69.52H19.31V73.38H15.45ZM23.17 69.52H30.90V73.38H23.17ZM38.62 69.52H42.48V73.38H38.62ZM61.79 69.52H73.38V73.38H61.79ZM77.24 69.52H92.69V73.38H77.24ZM100.41 69.52H104.27V73.38H100.41ZM108.14 69.52H112.00V73.38H108.14ZM0.00 73.38H15.45V77.24H0.00ZM19.31 73.38H23.17V77.24H19.31ZM30.90 73.38H34.76V77.24H30.90ZM42.48 73.38H46.34V77.24H42.48ZM54.07 73.38H65.65V77.24H54.07ZM88.83 73.38H92.69V77.24H88.83ZM100.41 73.38H104.27V77.24H100.41ZM0.00 77.24H7.72V81.10H0.00ZM11.59 77.24H15.45V81.10H11.59ZM23.17 77.24H27.03V81.10H23.17ZM30.90 77.24H50.21V81.10H30.90ZM65.65 77.24H73.38V81.10H65.65ZM77.24 77.24H96.55V81.10H77.24ZM100.41 77.24H112.00V81.10H100.41ZM30.90 81.10H42.48V84.96H30.90ZM57.93 81.10H61.79V84.96H57.93ZM65.65 81.10H69.52V84.96H65.65ZM77.24 81.10H81.10V84.96H77.24ZM92.69 81.10H96.55V84.96H92.69ZM100.41 81.10H104.27V84.96H100.41ZM0.00 84.96H27.03V88.83H0.00ZM30.90 84.96H34.76V88.83H30.90ZM38.62 84.96H42.48V88.83H38.62ZM50.21 84.96H54.07V88.83H50.21ZM73.38 84.96H81.10V88.83H73.38ZM84.96 84.96H88.83V88.83H84.96ZM92.69 84.96H100.41V88.83H92.69ZM0.00 88.83H3.86V92.69H0.00ZM23.17 88.83H27.03V92.69H23.17ZM38.62 88.83H46.34V92.69H38.62ZM54.07 88.83H57.93V92.69H54.07ZM65.65 88.83H69.52V92.69H65.65ZM73.38 88.83H81.10V92.69H73.38ZM92.69 88.83H100.41V92.69H92.69ZM108.14 88.83H112.00V92.69H108.14ZM0.00 92.69H3.86V96.55H0.00ZM7.72 92.69H19.31V96.55H7.72ZM23.17 92.69H27.03V96.55H23.17ZM30.90 92.69H34.76V96.55H30.90ZM38.62 92.69H54.07V96.55H38.62ZM57.93 92.69H65.65V96.55H57.93ZM73.38 92.69H96.55V96.55H73.38ZM0.00 96.55H3.86V100.41H0.00ZM7.72 96.55H19.31V100.41H7.72ZM23.17 96.55H27.03V100.41H23.17ZM30.90 96.55H38.62V100.41H30.90ZM46.34 96.55H50.21V100.41H46.34ZM57.93 96.55H61.79V100.41H57.93ZM65.65 96.55H73.38V100.41H65.65ZM81.10 96.55H84.96V100.41H81.10ZM96.55 96.55H100.41V100.41H96.55ZM104.27 96.55H108.14V100.41H104.27ZM0.00 100.41H3.86V104.27H0.00ZM7.72 100.41H19.31V104.27H7.72ZM23.17 100.41H27.03V104.27H23.17ZM38.62 100.41H42.48V104.27H38.62ZM50.21 100.41H54.07V104.27H50.21ZM57.93 100.41H65.65V104.27H57.93ZM69.52 100.41H73.38V104.27H69.52ZM81.10 100.41H84.96V104.27H81.10ZM88.83 100.41H96.55V104.27H88.83ZM104.27 100.41H112.00V104.27H104.27ZM0.00 104.27H3.86V108.14H0.00ZM23.17 104.27H27.03V108.14H23.17ZM34.76 104.27H38.62V108.14H34.76ZM46.34 104.27H81.10V108.14H46.34ZM84.96 104.27H92.69V108.14H84.96ZM100.41 104.27H104.27V108.14H100.41ZM108.14 104.27H112.00V108.14H108.14ZM0.00 108.14H27.03V112.00H0.00ZM46.34 108.14H50.21V112.00H46.34ZM61.79 108.14H69.52V112.00H61.79ZM77.24 108.14H81.10V112.00H77.24ZM88.83 108.14H96.55V112.00H88.83ZM100.41 108.14H104.27V112.00H100.41Z"/></svg>
<div class="b" style="left:235px;top:808px;width:40px;height:40px;background:#fff;border-radius:50%;box-shadow:0 2px 6px rgba(0,0,0,.12)"></div>
<svg style="left:249px;top:823px" width="12" height="10" viewBox="0 0 12 10"><path d="M2 3 L6 7 L10 3" stroke="#303030" stroke-width="1.6" fill="none" stroke-linecap="round" stroke-linejoin="round"/></svg>
<div class="b" style="left:1669px;top:794px;width:54px;height:54px;border-radius:50%;box-shadow:0 3px 8px rgba(0,0,0,.12)"></div>
<svg style="left:1669px;top:794px" width="54" height="54" viewBox="0 0 54 54"><defs><linearGradient id="av" x1="0" y1="0" x2="0" y2="1"><stop offset="0" stop-color="#fcd896"/><stop offset="0.45" stop-color="#d9dca2"/><stop offset="0.65" stop-color="#a9dab8"/><stop offset="1" stop-color="#4fcbe3"/></linearGradient><clipPath id="avc"><circle cx="27" cy="27" r="27"/></clipPath></defs>
<g clip-path="url(#avc)"><rect width="54" height="54" fill="url(#av)"/>
<path d="M19.3 17 Q19.3 8.6 27 8.6 Q34.6 8.6 34.6 17 L34.4 27.5 L19.6 27.5 Z" fill="#5b3b2c"/>
<ellipse cx="27" cy="21.5" rx="5.8" ry="6.6" fill="#f0cdb6"/>
<path d="M20.8 17.5 Q22 11 27 11 Q32.5 11 33.2 17.5 Q29 14.6 20.8 17.5 Z" fill="#5b3b2c"/>
<rect x="24.5" y="26" width="5" height="4" fill="#e9c0a6"/>
<path d="M8 54 L11.2 33.5 Q12.5 30 18 29.5 L23 29.3 Q27 32.5 31 29.3 L36 29.5 Q41.5 30 42.8 33.5 L46 54 Z" fill="#141d4d"/>
<path d="M11.5 44 L16.5 44.5 L16 53 L11 53 Z" fill="#f0c8ad"/><path d="M37.5 44.5 L42.5 44 L43 53 L38 53 Z" fill="#e9c0a6"/>
<path d="M16.5 41.5 L20 38.6 L19.5 42.5 Z" fill="#e85a5a"/><path d="M18.6 42.3 L21.4 38.6 L21.4 42.6 Z" fill="#5ac8f0"/><rect x="22" y="39.6" width="13.5" height="2.6" fill="#d5dcec" opacity="0.75"/>
</g></svg>
</body></html>
